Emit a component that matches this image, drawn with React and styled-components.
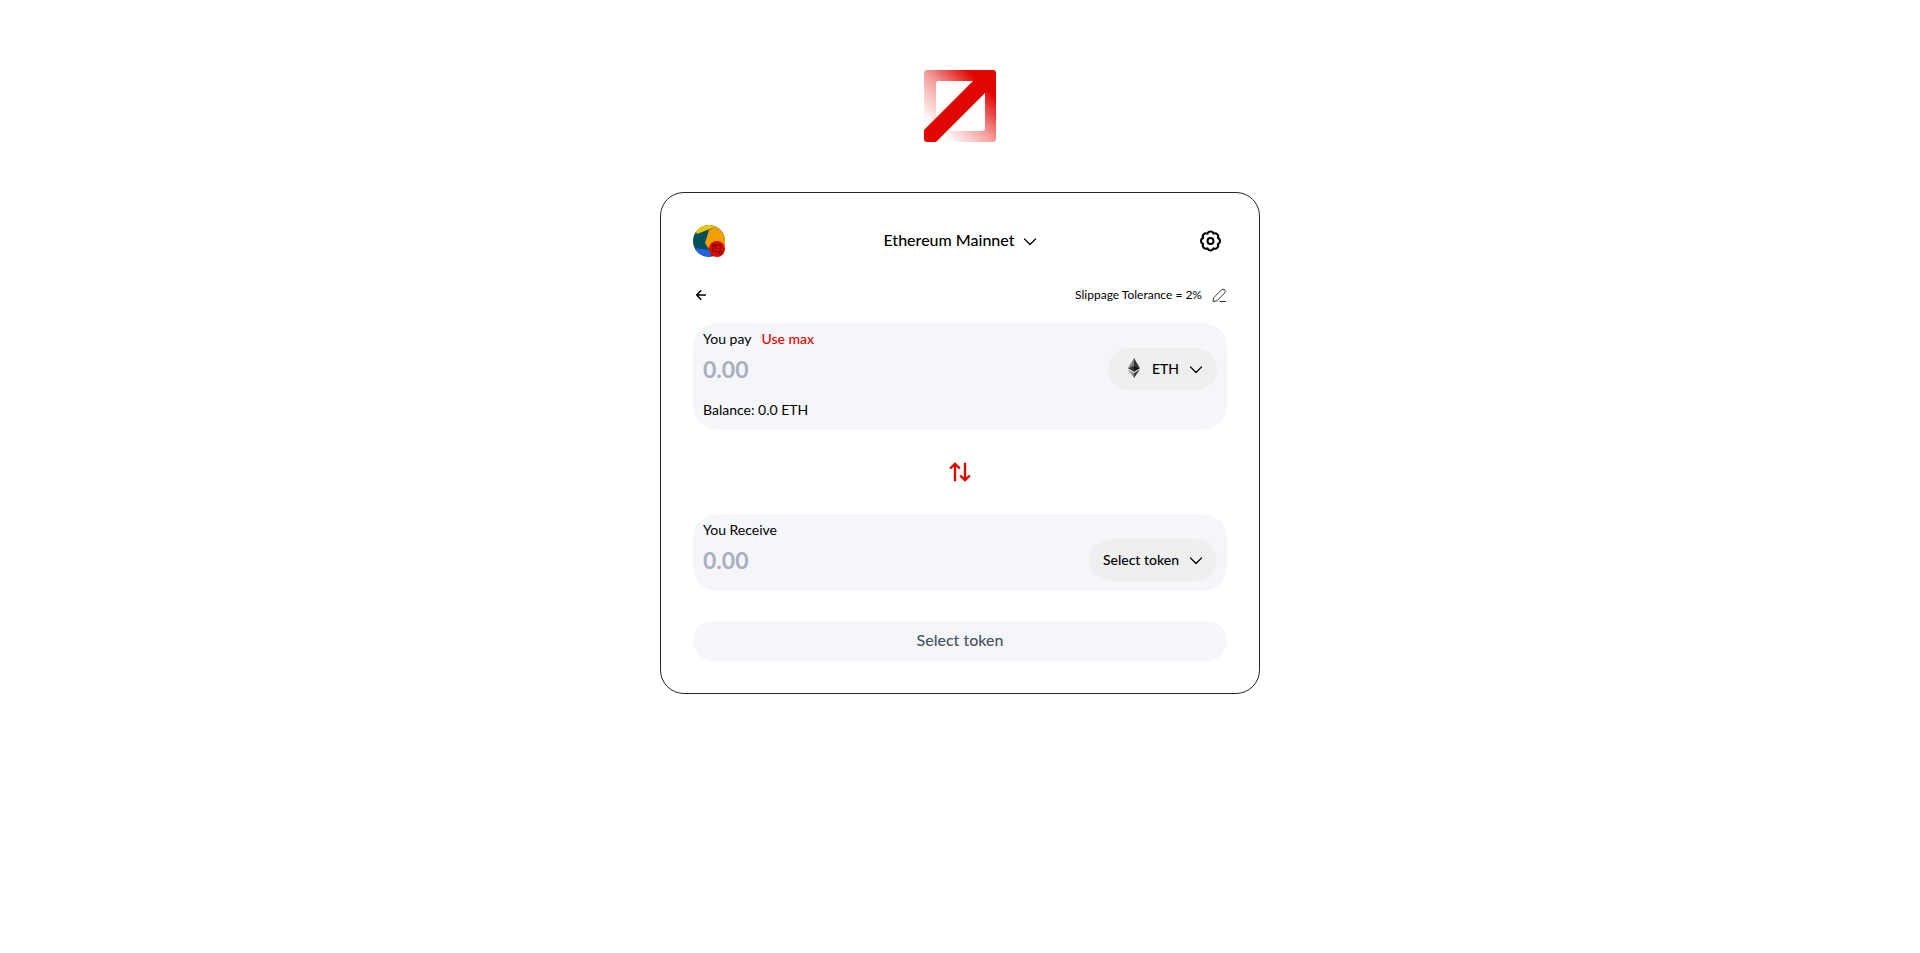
import React from 'react';
import styled, { createGlobalStyle } from 'styled-components';

const GlobalStyle = createGlobalStyle`
  * {
    box-sizing: border-box;
  }

  body {
    margin: 0;
    background: #fff;
    color: #000;
    font-family: Lato, 'Liberation Sans', sans-serif;
  }

  button, input {
    font-family: inherit;
  }

  svg {
    display: block;
    flex: none;
  }
`;

const Page = styled.main`
  display: flex;
  flex-direction: column;
  align-items: center;
  gap: 50px;
  padding: 70px 16px;
`;

const Card = styled.form`
  width: 100%;
  max-width: 600px;
  padding: 32px;
  border: 1px solid #252530;
  border-radius: 24px;
`;

const Header = styled.header`
  display: grid;
  grid-template-columns: 32px 1fr 32px;
  align-items: center;
`;

const PlainButton = styled.button`
  display: flex;
  align-items: center;
  justify-content: center;
  padding: 0;
  border: 0;
  background: none;
  color: ${({ $color }) => $color || '#000'};
  cursor: pointer;
`;

const NetworkButton = styled(PlainButton)`
  justify-self: center;
  gap: 8px;
  padding-bottom: 2px;
  font-size: 16px;
  font-weight: 500;
  line-height: 24px;
`;

const Toolbar = styled.div`
  display: flex;
  align-items: center;
  justify-content: space-between;
  margin-top: 28px;
  padding-left: 3px;
`;

const Slippage = styled.div`
  display: flex;
  align-items: center;
  gap: 10px;
  font-size: 12px;
  line-height: 20px;
`;

const Panel = styled.section`
  display: flex;
  align-items: flex-start;
  justify-content: space-between;
  gap: 16px;
  margin-top: ${({ $top }) => $top};
  padding: 6px 10px 10px;
  border-radius: 24px;
  background: #f5f6fa;
`;

const Amount = styled.div`
  flex: 1;
  min-width: 0;
`;

const LabelRow = styled.div`
  display: flex;
  gap: 10px;
  font-size: 14px;
  line-height: 20px;
`;

const MaxButton = styled(PlainButton)`
  font-size: 14px;
  font-weight: 500;
  line-height: 20px;
`;

const AmountInput = styled.input`
  display: block;
  width: 100%;
  height: 40px;
  padding: 0;
  border: 0;
  outline: 0;
  background: none;
  color: #000;
  font-size: 23px;
  font-weight: 700;

  &::placeholder {
    color: #abaec2;
    opacity: 1;
  }
`;

const Balance = styled.p`
  margin: 11px 0 0;
  font-size: 14px;
  line-height: 20px;
`;

const TokenButton = styled(PlainButton)`
  height: 42px;
  margin-top: 19px;
  padding: 0 14px 2px;
  gap: 10px;
  border-radius: 21px;
  background: #efefef;
  font-size: 14px;
  font-weight: 500;
`;

const SwitchButton = styled(PlainButton)`
  margin: 31px auto 0;
`;

const Submit = styled.button`
  display: block;
  width: 100%;
  height: 40px;
  margin-top: 30px;
  padding: 0 0 4px;
  border: 0;
  border-radius: 20px;
  background: #f5f6fa;
  color: #4b5263;
  font-size: 16px;
  font-weight: 500;
`;

const Logo = () => (
  <svg width="72" height="72" viewBox="0 0 72 72" role="img" aria-label="Logo">
    <defs>
      <linearGradient id="frameTop" x1="4" y1="48" x2="48" y2="4" gradientUnits="userSpaceOnUse">
        <stop offset="0" stopColor="#e10600" stopOpacity="0.04" />
        <stop offset="0.5" stopColor="#e10600" stopOpacity="0.4" />
        <stop offset="1" stopColor="#e10600" />
      </linearGradient>
      <linearGradient id="frameSide" x1="26" y1="70" x2="70" y2="26" gradientUnits="userSpaceOnUse">
        <stop offset="0" stopColor="#e10600" stopOpacity="0.02" />
        <stop offset="0.5" stopColor="#e10600" stopOpacity="0.4" />
        <stop offset="1" stopColor="#e10600" />
      </linearGradient>
    </defs>
    <path fill="url(#frameTop)" d="M0 52V3Q0 0 3 0H60V11H15Q12 11 12 14V52Z" />
    <path fill="url(#frameSide)" d="M22 72H69Q72 72 72 69V12H61V58Q61 61 58 61H22Z" />
    <path fill="#e10600" d="M60 0H69Q72 0 72 3V12L61 23 12 72H3Q0 72 0 69V60L49 11Z" />
  </svg>
);

const Avatar = () => (
  <svg width="32" height="32" viewBox="0 0 32 32" aria-hidden="true">
    <defs>
      <clipPath id="avatarClip">
        <circle cx="16" cy="16" r="16" />
      </clipPath>
    </defs>
    <g clipPath="url(#avatarClip)">
      <path fill="#034f5b" d="M0 0H32V32H0Z" />
      <path fill="#f19f05" d="M16 5 26 0H32V24H16L12 18Z" />
      <path fill="#edc70a" d="M0 0H24L22 2 4 9Z" />
      <path fill="#2362e1" d="M0 23 18 25V32H0Z" />
    </g>
    <circle cx="24" cy="24" r="8" fill="#e10600" />
    <g fill="none" stroke="#641414" strokeWidth="1.2">
      <circle cx="21" cy="20.5" r="1.5" />
      <circle cx="27.5" cy="27.5" r="1.5" />
      <path d="M23 20H26Q28 20 28 22T26 24.5M20 23Q19 25 21 26.5H25.5M22.5 22.5 24 24" />
    </g>
  </svg>
);

const Chevron = () => (
  <svg width="14" height="14" viewBox="0 0 14 14" fill="none" stroke="currentColor" strokeWidth="1.2" strokeLinecap="round" strokeLinejoin="round" aria-hidden="true">
    <path d="M1.5 6 7 11.5 12.5 6" />
  </svg>
);

// eight-lobed outline with a ring in the middle
const Gear = () => (
  <svg width="24" height="24" viewBox="0 0 24 24" fill="none" stroke="currentColor" strokeWidth="2" strokeLinejoin="round" aria-hidden="true">
    <path d="M8.5 4.7A3.15 3.15 0 0 1 14.5 4.7A3.15 3.15 0 0 1 18.8 9A3.15 3.15 0 0 1 18.8 15A3.15 3.15 0 0 1 14.5 19.3A3.15 3.15 0 0 1 8.5 19.3A3.15 3.15 0 0 1 4.2 15A3.15 3.15 0 0 1 4.2 9A3.15 3.15 0 0 1 8.5 4.7Z" />
    <circle cx="11.5" cy="12" r="3" />
  </svg>
);

const BackArrow = () => (
  <svg width="10" height="10" viewBox="0 0 10 10" fill="none" stroke="currentColor" strokeWidth="1.5" strokeLinecap="round" strokeLinejoin="round" aria-hidden="true">
    <path d="M9.5 5H.8M4.8.8.7 5l4.1 4.2" />
  </svg>
);

const Pencil = () => (
  <svg width="15" height="15" viewBox="0 0 15 15" fill="none" stroke="#3a3a3a" strokeWidth="1" strokeLinejoin="round" aria-hidden="true">
    <path d="M1 13.5 1.6 9.8 9.3 2Q11 .3 12.6 1.8T12.6 5L5 12.8ZM7.5 13.5H14" />
  </svg>
);

const EthMark = () => (
  <svg width="20" height="22" viewBox="0 0 20 22" aria-hidden="true">
    <g transform="translate(0 1)">
      <path fill="#828384" d="M12 0 6 10.2 12 7.5Z" />
      <path fill="#343434" d="M12 0 18 10.2 12 7.5Z" />
      <path fill="#393939" d="M6 10.2 12 7.5V13.8Z" />
      <path fill="#141414" d="M18 10.2 12 7.5V13.8Z" />
      <path fill="#8c8c8c" d="M6 11.6 12 15.1V20Z" />
      <path fill="#3c3c3b" d="M18 11.6 12 15.1V20Z" />
    </g>
  </svg>
);

const SwapArrows = () => (
  <svg width="22" height="22" viewBox="0 0 22 22" fill="none" stroke="currentColor" strokeWidth="2.4" strokeLinecap="round" strokeLinejoin="round" aria-hidden="true">
    <path d="M6 19.2V2.8M1.8 6.8 6 2.8 10.2 6.8M16 2.8V19.2M11.8 15.2 16 19.2 20.2 15.2" />
  </svg>
);

const App = () => {
  return (
    <>
      <GlobalStyle />
      <Page>
        <Logo />
        <Card onSubmit={(e) => e.preventDefault()}>
          <Header>
            <PlainButton type="button" aria-label="Account">
              <Avatar />
            </PlainButton>
            <NetworkButton type="button">
              Ethereum Mainnet
              <Chevron />
            </NetworkButton>
            <PlainButton type="button" aria-label="Settings">
              <Gear />
            </PlainButton>
          </Header>
          <Toolbar>
            <PlainButton type="button" aria-label="Back">
              <BackArrow />
            </PlainButton>
            <Slippage>
              Slippage Tolerance = 2%
              <PlainButton type="button" aria-label="Edit slippage">
                <Pencil />
              </PlainButton>
            </Slippage>
          </Toolbar>
          <Panel $top="18px">
            <Amount>
              <LabelRow>
                <label htmlFor="pay">You pay</label>
                <MaxButton type="button" $color="#e10600">Use max</MaxButton>
              </LabelRow>
              <AmountInput id="pay" placeholder="0.00" inputMode="decimal" />
              <Balance>Balance: 0.0 ETH</Balance>
            </Amount>
            <TokenButton type="button">
              <EthMark />
              ETH
              <Chevron />
            </TokenButton>
          </Panel>
          <SwitchButton type="button" aria-label="Switch tokens" $color="#d90b04">
            <SwapArrows />
          </SwitchButton>
          <Panel $top="31px">
            <Amount>
              <LabelRow>
                <label htmlFor="receive">You Receive</label>
              </LabelRow>
              <AmountInput id="receive" placeholder="0.00" inputMode="decimal" />
            </Amount>
            <TokenButton type="button">
              Select token
              <Chevron />
            </TokenButton>
          </Panel>
          <Submit type="submit">Select token</Submit>
        </Card>
      </Page>
    </>
  );
};

export default App;
